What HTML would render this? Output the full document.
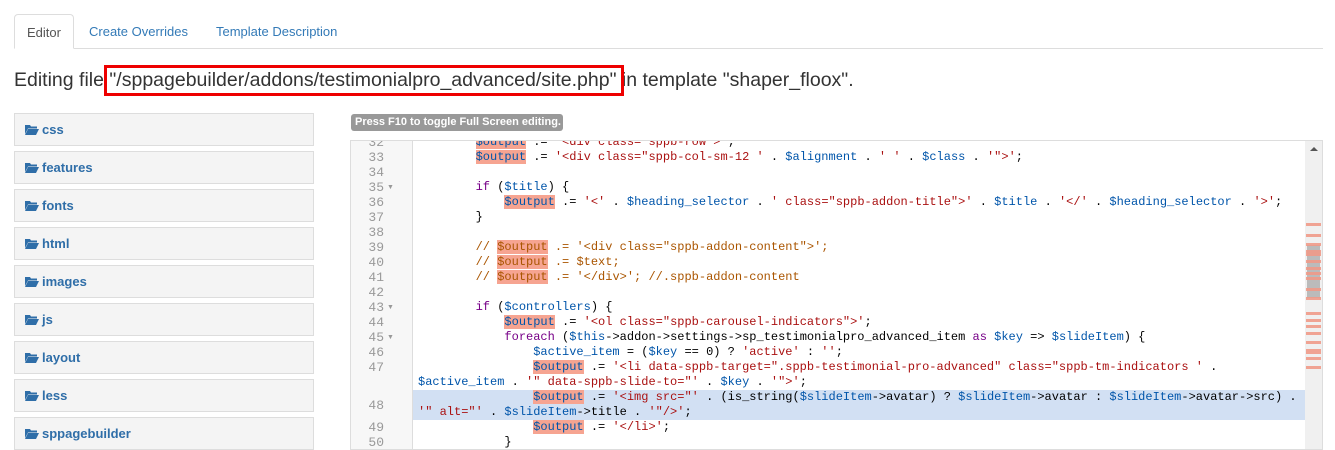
<!DOCTYPE html>
<html><head><meta charset="utf-8"><style>
*{margin:0;padding:0;box-sizing:border-box}
body{width:1335px;height:444px;overflow:hidden;background:#fff;font-family:"Liberation Sans",Arial,sans-serif;position:relative}
.abs{position:absolute}
.tabline{left:14px;top:48px;width:1309px;height:1px;background:#ddd}
.tab{top:14px;height:35px;font-size:13px;color:#337ab7;line-height:35px}
.tab.on{left:14px;width:60px;border:1px solid #ddd;border-bottom:1px solid #fff;border-radius:4px 4px 0 0;color:#555;text-align:center;background:#fff}
h1{position:absolute;left:14px;top:66px;font-size:19.5px;font-weight:normal;color:#333;white-space:nowrap;line-height:28px}
.red{left:104px;top:65px;width:520px;height:31px;border:3px solid #e00}
.item{left:14px;width:300px;height:33px;background:#f4f4f4;border:1px solid #ddd;font-size:13px;font-weight:bold;color:#2f6ea8;line-height:31px;padding-left:27px}
.item svg{position:absolute;left:10px;top:10px}
.badge{left:351px;top:114px;width:212px;height:17px;background:#999;border-radius:3px;color:#fff;font-size:11px;font-weight:bold;line-height:17px;padding-left:4px}
.ed{left:350px;top:140px;width:973px;height:310px;border:1px solid #ddd;overflow:hidden;background:#fff}
.gut{left:0;top:0;width:62px;height:310px;background:#f7f7f7;border-right:1px solid #ddd}
.ln{position:absolute;left:0;width:33px;text-align:right;font-family:"Liberation Mono",monospace;font-size:13px;color:#999;line-height:15px}
.fd{position:absolute;left:36px;font-size:7px;color:#999;line-height:15px}
.cl{position:absolute;left:67px;font-family:"Liberation Mono",monospace;font-size:12px;line-height:15px;white-space:pre;color:#000}
.v{color:#05a}.s{color:#a11}.k{color:#708}.c{color:#a50}.h{background:#f6a491}
.al{position:absolute;left:62px;top:249px;width:892px;height:30px;background:#d2e0f3}
.sb{left:954px;top:0;width:17px;height:310px;background:#f0f0f0}
.mk{position:absolute;left:1px;width:15px;height:3px;background:#f09a88;opacity:.9}
</style></head><body>
<div class="abs tabline"></div>
<div class="abs tab on">Editor</div>
<div class="abs tab" style="left:89px">Create Overrides</div>
<div class="abs tab" style="left:216px">Template Description</div>
<h1>Editing file "/sppagebuilder/addons/testimonialpro_advanced/site.php" in template "shaper_floox".</h1>
<div class="abs red"></div>

<div class="abs item" style="top:113px"><svg width="14" height="11" viewBox="0 0 14 11"><path d="M0 1h5l1 1.5h6v2H3L0 10z" fill="#2f6ea8"/><path d="M3 5h11l-3 6H0z" fill="#2f6ea8"/></svg>css</div>
<div class="abs item" style="top:151px"><svg width="14" height="11" viewBox="0 0 14 11"><path d="M0 1h5l1 1.5h6v2H3L0 10z" fill="#2f6ea8"/><path d="M3 5h11l-3 6H0z" fill="#2f6ea8"/></svg>features</div>
<div class="abs item" style="top:189px"><svg width="14" height="11" viewBox="0 0 14 11"><path d="M0 1h5l1 1.5h6v2H3L0 10z" fill="#2f6ea8"/><path d="M3 5h11l-3 6H0z" fill="#2f6ea8"/></svg>fonts</div>
<div class="abs item" style="top:227px"><svg width="14" height="11" viewBox="0 0 14 11"><path d="M0 1h5l1 1.5h6v2H3L0 10z" fill="#2f6ea8"/><path d="M3 5h11l-3 6H0z" fill="#2f6ea8"/></svg>html</div>
<div class="abs item" style="top:265px"><svg width="14" height="11" viewBox="0 0 14 11"><path d="M0 1h5l1 1.5h6v2H3L0 10z" fill="#2f6ea8"/><path d="M3 5h11l-3 6H0z" fill="#2f6ea8"/></svg>images</div>
<div class="abs item" style="top:303px"><svg width="14" height="11" viewBox="0 0 14 11"><path d="M0 1h5l1 1.5h6v2H3L0 10z" fill="#2f6ea8"/><path d="M3 5h11l-3 6H0z" fill="#2f6ea8"/></svg>js</div>
<div class="abs item" style="top:341px"><svg width="14" height="11" viewBox="0 0 14 11"><path d="M0 1h5l1 1.5h6v2H3L0 10z" fill="#2f6ea8"/><path d="M3 5h11l-3 6H0z" fill="#2f6ea8"/></svg>layout</div>
<div class="abs item" style="top:379px"><svg width="14" height="11" viewBox="0 0 14 11"><path d="M0 1h5l1 1.5h6v2H3L0 10z" fill="#2f6ea8"/><path d="M3 5h11l-3 6H0z" fill="#2f6ea8"/></svg>less</div>
<div class="abs item" style="top:417px"><svg width="14" height="11" viewBox="0 0 14 11"><path d="M0 1h5l1 1.5h6v2H3L0 10z" fill="#2f6ea8"/><path d="M3 5h11l-3 6H0z" fill="#2f6ea8"/></svg>sppagebuilder</div>

<div class="abs badge">Press F10 to toggle Full Screen editing.</div>

<div class="abs ed">
<div class="abs gut">
<div class="ln" style="top:-6px">32</div><div class="ln" style="top:9px">33</div><div class="ln" style="top:24px">34</div><div class="ln" style="top:39px">35</div><div class="fd" style="top:39px">▼</div><div class="ln" style="top:54px">36</div><div class="ln" style="top:69px">37</div><div class="ln" style="top:84px">38</div><div class="ln" style="top:99px">39</div><div class="ln" style="top:114px">40</div><div class="ln" style="top:129px">41</div><div class="ln" style="top:144px">42</div><div class="ln" style="top:159px">43</div><div class="fd" style="top:159px">▼</div><div class="ln" style="top:174px">44</div><div class="ln" style="top:189px">45</div><div class="fd" style="top:189px">▼</div><div class="ln" style="top:204px">46</div><div class="ln" style="top:219px">47</div><div class="ln" style="top:257px">48</div><div class="ln" style="top:279px">49</div><div class="ln" style="top:294px">50</div>
</div>
<div class="al"></div>
<div class="cl" style="top:-6px">        <span class="v h">$output</span> .= <span class="s">'&lt;div class="sppb-row"&gt;'</span>;</div>
<div class="cl" style="top:9px">        <span class="v h">$output</span> .= <span class="s">'&lt;div class="sppb-col-sm-12 '</span> . <span class="v">$alignment</span> . <span class="s">' '</span> . <span class="v">$class</span> . <span class="s">'"&gt;'</span>;</div>
<div class="cl" style="top:39px">        <span class="k">if</span> (<span class="v">$title</span>) {</div>
<div class="cl" style="top:54px">            <span class="v h">$output</span> .= <span class="s">'&lt;'</span> . <span class="v">$heading_selector</span> . <span class="s">' class="sppb-addon-title"&gt;'</span> . <span class="v">$title</span> . <span class="s">'&lt;/'</span> . <span class="v">$heading_selector</span> . <span class="s">'&gt;'</span>;</div>
<div class="cl" style="top:69px">        }</div>
<div class="cl c" style="top:99px">        // <span class="h">$output</span> .= '&lt;div class="sppb-addon-content"&gt;';</div>
<div class="cl c" style="top:114px">        // <span class="h">$output</span> .= $text;</div>
<div class="cl c" style="top:129px">        // <span class="h">$output</span> .= '&lt;/div&gt;'; //.sppb-addon-content</div>
<div class="cl" style="top:159px">        <span class="k">if</span> (<span class="v">$controllers</span>) {</div>
<div class="cl" style="top:174px">            <span class="v h">$output</span> .= <span class="s">'&lt;ol class="sppb-carousel-indicators"&gt;'</span>;</div>
<div class="cl" style="top:189px">            <span class="k">foreach</span> (<span class="v">$this</span>-&gt;addon-&gt;settings-&gt;sp_testimonialpro_advanced_item <span class="k">as</span> <span class="v">$key</span> =&gt; <span class="v">$slideItem</span>) {</div>
<div class="cl" style="top:204px">                <span class="v">$active_item</span> = (<span class="v">$key</span> == 0) ? <span class="s">'active'</span> : <span class="s">''</span>;</div>
<div class="cl" style="top:219px">                <span class="v h">$output</span> .= <span class="s">'&lt;li data-sppb-target=".sppb-testimonial-pro-advanced" class="sppb-tm-indicators '</span> .</div>
<div class="cl" style="top:234px"><span class="v">$active_item</span> . <span class="s">'" data-sppb-slide-to="'</span> . <span class="v">$key</span> . <span class="s">'"&gt;'</span>;</div>
<div class="cl" style="top:249px">                <span class="v h">$output</span> .= <span class="s">'&lt;img src="'</span> . (is_string(<span class="v">$slideItem</span>-&gt;avatar) ? <span class="v">$slideItem</span>-&gt;avatar : <span class="v">$slideItem</span>-&gt;avatar-&gt;src) .</div>
<div class="cl" style="top:264px"><span class="s">'" alt="'</span> . <span class="v">$slideItem</span>-&gt;title . <span class="s">'"/&gt;'</span>;</div>
<div class="cl" style="top:279px">                <span class="v h">$output</span> .= <span class="s">'&lt;/li&gt;'</span>;</div>
<div class="cl" style="top:294px">            }</div>
<div class="abs sb">
<div style="position:absolute;left:5px;top:6px;border-left:4px solid transparent;border-right:4px solid transparent;border-bottom:4px solid #555"></div>
<div style="position:absolute;left:2px;top:104px;width:13px;height:53px;background:#bbb"></div>
<div class="mk" style="top:82px"></div><div class="mk" style="top:93px"></div><div class="mk" style="top:102px"></div><div class="mk" style="top:109px;height:6px"></div><div class="mk" style="top:119px"></div><div class="mk" style="top:126px"></div><div class="mk" style="top:131px"></div><div class="mk" style="top:136px"></div><div class="mk" style="top:147px"></div><div class="mk" style="top:156px"></div><div class="mk" style="top:171px"></div><div class="mk" style="top:178px"></div><div class="mk" style="top:184px"></div><div class="mk" style="top:191px"></div><div class="mk" style="top:200px"></div><div class="mk" style="top:208px;height:5px"></div><div class="mk" style="top:216px"></div><div class="mk" style="top:225px"></div>
</div>
</div>
</body></html>
